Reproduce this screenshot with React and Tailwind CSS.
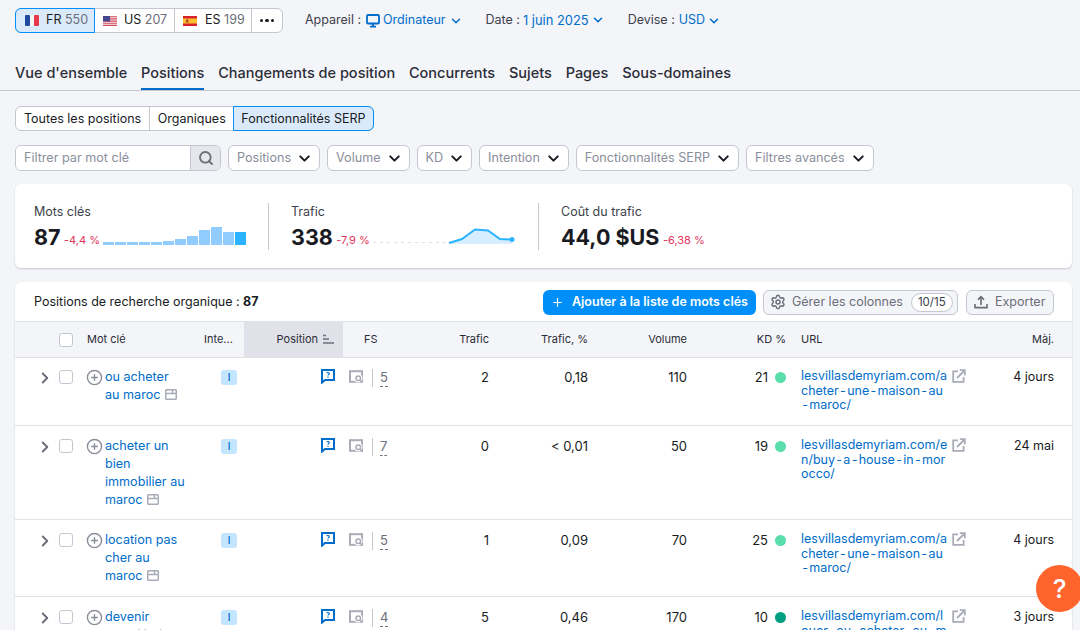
import React from "react";
import { ChevronDown, ChevronRight, CirclePlus, Search, Settings, Plus } from "lucide-react";

const FONT = { fontFamily: "Inter, 'Noto Sans', sans-serif" };

function FlagFR() {
  return (
    <svg width="14" height="11" viewBox="0 0 14 11" className="shrink-0">
      <rect width="5" height="11" fill="#1d4a9c" rx="1" />
      <rect x="5" width="4" height="11" fill="#f5f5f5" />
      <rect x="9" width="5" height="11" fill="#e5394a" rx="1" />
    </svg>
  );
}

function FlagUS() {
  return (
    <svg width="14" height="10" viewBox="0 0 14 10" className="shrink-0">
      <rect width="14" height="10" fill="#f3f3f6" />
      <path d="M0 0.7h14M0 2.9h14M0 5.1h14M0 7.3h14M0 9.4h14" stroke="#d64a5a" strokeWidth="1.1" />
      <rect width="7" height="5.5" fill="#46478f" />
    </svg>
  );
}

function FlagES() {
  return (
    <svg width="14" height="10" viewBox="0 0 14 10" className="shrink-0">
      <rect width="14" height="10" fill="#d8222e" />
      <rect y="2.5" width="14" height="5" fill="#fbc02d" />
      <rect x="3" y="3.5" width="2.5" height="3" fill="#b5462a" />
    </svg>
  );
}

function MonitorIcon() {
  return (
    <svg width="14" height="14" viewBox="0 0 14 14" className="shrink-0">
      <rect x="1" y="1" width="12" height="8.5" rx="1" fill="none" stroke="#006dca" strokeWidth="1.8" />
      <path d="M4 12.6h6M7 9.5v3" stroke="#006dca" strokeWidth="1.8" />
    </svg>
  );
}

function SortIcon() {
  return (
    <svg width="11" height="11" viewBox="0 0 11 11" className="shrink-0">
      <path d="M0 1.5h3M0 5h6M0 9h11" stroke="#6c6e79" strokeWidth="1.4" />
    </svg>
  );
}

function ExportIcon() {
  return (
    <svg width="14" height="14" viewBox="0 0 14 14" className="shrink-0">
      <path d="M1 9v3.6h12V9M7 10V2M4 4.6 7 1.6l3 3" fill="none" stroke="#6c6e79" strokeWidth="1.6" />
    </svg>
  );
}

function QuestionBubble() {
  return (
    <svg width="14" height="15" viewBox="0 0 14 15" className="shrink-0">
      <path d="M1 1h12v10H4L1 13.6Z" fill="none" stroke="#006dca" strokeWidth="2" />
      <path d="M5.7 4.2c.3-1 2.6-1 2.6.4 0 .9-1.3 1-1.3 1.9M7 7.6v1.2" fill="none" stroke="#006dca" strokeWidth="1.2" />
    </svg>
  );
}

function SerpIcon() {
  return (
    <svg width="14" height="13" viewBox="0 0 14 13" className="shrink-0">
      <rect x="1" y="1.2" width="12" height="10.6" fill="none" stroke="#a9abb6" strokeWidth="2" />
      <circle cx="9.3" cy="8.3" r="4.2" fill="#ffffff" />
      <circle cx="9.3" cy="8.3" r="2.3" fill="none" stroke="#a9abb6" strokeWidth="1.5" />
      <path d="m11 10 2 2" stroke="#a9abb6" strokeWidth="1.6" />
    </svg>
  );
}

function WindowIcon() {
  return (
    <svg width="12" height="11" viewBox="0 0 12 11" className="shrink-0 inline-block ml-[5px] align-[-1px]">
      <rect x="0.7" y="0.7" width="10.6" height="9.6" rx="1" fill="none" stroke="#a9abb6" strokeWidth="1.5" />
      <path d="M.7 4.4h10.6M7.5 .7v3.7" stroke="#a9abb6" strokeWidth="1.5" />
    </svg>
  );
}

function ExternalIcon() {
  return (
    <svg width="14" height="14" viewBox="0 0 14 14" className="shrink-0">
      <path d="M6 2.4H1.2v10.4h10.4V8" fill="none" stroke="#a9abb6" strokeWidth="1.8" />
      <path d="M5 9 12 2M7.8 1.2h5v5" fill="none" stroke="#a9abb6" strokeWidth="1.8" />
    </svg>
  );
}

function BarsChart() {
  const heights = [3, 3, 3, 3, 3, 4, 6, 9, 15, 18, 13, 13];
  return (
    <svg width="144" height="20" viewBox="0 0 144 20" className="shrink-0">
      {heights.map((h, i) => (
        <rect key={i} x={i * 12} y={20 - h} width="11" height={h} fill={i === 11 ? "#2bb3ff" : "#90ccff"} />
      ))}
    </svg>
  );
}

function TrafficChart() {
  return (
    <svg width="144" height="20" viewBox="0 0 144 20" className="shrink-0">
      <path d="M0 17.5h76" stroke="#e0e1e9" strokeWidth="1" strokeDasharray="3 4" />
      <path d="M76 18 89 14 102 4.5 115 5.5 127 14 139 14.5V19H76Z" fill="#d6eeff" />
      <path d="M76 18 89 14 102 4.5 115 5.5 127 14 139 14.5" fill="none" stroke="#2bb3ff" strokeWidth="2" />
      <circle cx="139" cy="14.5" r="2.5" fill="#2bb3ff" />
    </svg>
  );
}

function Filter({ label, className = "" }) {
  return (
    <div className={`h-[26px] flex items-center gap-[5px] pl-[8px] pr-[6px] bg-white border border-[#c4c7cf] rounded-[6px] text-[#8a8e9b] ${className}`}>
      {label}
      <ChevronDown size={17} strokeWidth={2.8} className="text-[#191b23]" />
    </div>
  );
}

function Metric({ className, title, value, delta, children }) {
  return (
    <div className={className}>
      <div className="text-[12.5px] leading-[18px] text-[#3d3f4a]">{title}</div>
      <div className="flex items-end mt-[2px] h-[28px]">
        <span className="text-[21.5px] leading-[28px] font-bold text-[#191b23]">{value}</span>
        <span className="text-[11px] leading-[16px] text-[#e0355c] ml-[3.5px] mr-[3.5px] mb-[3px]">{delta}</span>
        {children && <div className="mb-[6px]">{children}</div>}
      </div>
    </div>
  );
}

// the reference draws url hyphens wider than the font does
function UrlLine({ text }) {
  const parts = text.split("-");
  return (
    <div className="whitespace-nowrap">
      {parts.map((part, i) => (
        <React.Fragment key={i}>
          {i > 0 && <span className="mx-[1.3px]">-</span>}
          {part}
        </React.Fragment>
      ))}
    </div>
  );
}

const ROWS = [
  {
    height: "h-[68px]",
    keyword: ["ou acheter", "au maroc"],
    fs: 5, trafic: "2", pct: "0,18", volume: "110", kd: 21,
    dot: "bg-[#59ddaa]",
    url: ["lesvillasdemyriam.com/a", "cheter-une-maison-au", "-maroc/"],
    maj: "4 jours",
  },
  {
    height: "h-[94px] pt-[1px]",
    keyword: ["acheter un", "bien", "immobilier au", "maroc"],
    fs: 7, trafic: "0", pct: "< 0,01", volume: "50", kd: 19,
    dot: "bg-[#59ddaa]",
    url: ["lesvillasdemyriam.com/e", "n/buy-a-house-in-mor", "occo/"],
    maj: "24 mai",
  },
  {
    height: "h-[77px] pt-[1px]",
    keyword: ["location pas", "cher au", "maroc"],
    fs: 5, trafic: "1", pct: "0,09", volume: "70", kd: 25,
    dot: "bg-[#59ddaa]",
    url: ["lesvillasdemyriam.com/a", "cheter-une-maison-au", "-maroc/"],
    maj: "4 jours",
  },
  {
    height: "h-[94px] pt-[1px]",
    keyword: ["devenir", "propriétaire", "au maroc"],
    fs: 4, trafic: "5", pct: "0,46", volume: "170", kd: 10,
    dot: "bg-[#009f81]",
    url: ["lesvillasdemyriam.com/l", "ouer-ou-acheter-au-m", "aroc/"],
    maj: "3 jours",
  },
];

const GRID = "grid grid-cols-[72px_117px_40px_99px_56px_100px_99px_99px_99px_180px_96px]";

function Row({ row }) {
  return (
    <div className={`${GRID} ${row.height} border-b border-[#e0e1e9] text-[13px] text-[#191b23]`}>
      <div className="flex items-start justify-end gap-[5px] pt-[12px] pr-[14px]">
        <ChevronRight size={18} strokeWidth={2.6} className="text-[#6c6e79] -mt-[1.5px]" />
        <div className="w-[14px] h-[14px] bg-white border border-[#c4c7cf] rounded-[3px]" />
      </div>
      <div className="flex items-start pt-[10px]">
        <CirclePlus size={17} strokeWidth={2} className="text-[#8a8e9b] mt-[1px] -ml-[1.5px] mr-[2.5px] shrink-0" />
        <div className="text-[12.6px] leading-[18px] text-[#006dca]">
          {row.keyword.map((line, i) => (
            <div key={i} className="whitespace-nowrap">
              {line}
              {i === row.keyword.length - 1 && <WindowIcon />}
            </div>
          ))}
        </div>
      </div>
      <div className="flex justify-end pt-[12px] pr-[7px]">
        <div className="w-[16px] h-[15px] rounded-[3px] bg-[#c4e5fe] text-[#006dca] text-[10px] leading-[15px] text-center font-medium">I</div>
      </div>
      <div className="flex justify-end pt-[11px] pr-[8px]">
        <QuestionBubble />
      </div>
      <div className="flex items-start pt-[12px] pl-[6px]">
        <SerpIcon />
        <div className="w-px h-[18px] bg-[#c4c7cf] ml-[9px] -mt-[1px]" />
        <div className="ml-[7px] leading-[17px] text-[#6c6e79] border-b border-dashed border-[#6c6e79] h-[18px] -mt-[1px]">{row.fs}</div>
      </div>
      <div className="text-right pr-[10px] pt-[10px] leading-[18px]">{row.trafic}</div>
      <div className="text-right pr-[10px] pt-[10px] leading-[18px]">{row.pct}</div>
      <div className="text-right pr-[10px] pt-[10px] leading-[18px]">{row.volume}</div>
      <div className="flex justify-end items-center gap-[7px] pr-[10px] pt-[10px] h-[28px] leading-[18px]">
        {row.kd}
        <span className={`w-[11px] h-[11px] rounded-full ${row.dot}`} />
      </div>
      <div className="flex pl-[5px] pt-[11px]">
        <div className="w-[151px] text-[12.5px] leading-[14.5px] text-[#006dca]">
          {row.url.map((line, i) => (
            <UrlLine key={i} text={line} />
          ))}
        </div>
        <ExternalIcon />
      </div>
      <div className="text-right text-[12.5px] pr-[18px] pt-[10px] leading-[18px]">{row.maj}</div>
    </div>
  );
}

export default function App() {
  return (
    <div style={FONT} className="relative w-[1080px] h-[630px] overflow-hidden bg-[#f4f5f9] text-[13px] text-[#191b23]">
      {/* region + device pickers */}
      <div className="flex items-center pl-[15px] pt-[8px] h-[33px]">
        <div className="flex h-[25px] text-[12.5px] bg-white border border-[#c4c7cf] rounded-[6px]">
          <div className="flex items-center gap-[7px] w-[80px] pl-[9px] -m-px h-[25px] bg-[#dbeafa] border border-[#008ff8] rounded-l-[6px]">
            <FlagFR />
            <span>FR <span className="text-[#6c6e79]">550</span></span>
          </div>
          <div className="flex items-center gap-[7px] w-[81px] pl-[9px] border-r border-[#c4c7cf]">
            <FlagUS />
            <span>US <span className="text-[#6c6e79]">207</span></span>
          </div>
          <div className="flex items-center gap-[8px] w-[77px] pl-[8px] border-r border-[#c4c7cf]">
            <FlagES />
            <span>ES <span className="text-[#6c6e79]">199</span></span>
          </div>
          <div className="flex items-center justify-center gap-[2px] w-[30px]">
            <span className="w-[3.5px] h-[3.5px] rounded-full bg-[#191b23]" />
            <span className="w-[3.5px] h-[3.5px] rounded-full bg-[#191b23]" />
            <span className="w-[3.5px] h-[3.5px] rounded-full bg-[#191b23]" />
          </div>
        </div>
        <div className="flex items-center ml-[22px] text-[12.5px] text-[#3d3f4a]">
          Appareil :
          <span className="ml-[5px] mr-[3px]"><MonitorIcon /></span>
          <span className="text-[#006dca]">Ordinateur</span>
          <ChevronDown size={14} strokeWidth={2.6} className="text-[#006dca] ml-[3px]" />
        </div>
        <div className="flex items-center ml-[23px] text-[12.5px] text-[#3d3f4a]">
          Date :<span className="text-[12.9px] text-[#006dca] ml-[3px]">1 juin 2025</span>
          <ChevronDown size={14} strokeWidth={2.6} className="text-[#006dca] ml-[2px]" />
        </div>
        <div className="flex items-center ml-[23px] text-[12.5px] text-[#3d3f4a]">
          Devise :<span className="text-[#006dca] ml-[4px]">USD</span>
          <ChevronDown size={14} strokeWidth={2.6} className="text-[#006dca] ml-[2px]" />
        </div>
      </div>

      {/* tabs */}
      <div className="flex gap-[13.8px] h-[50px] mt-[8px] px-[15px] pt-[22px] border-b border-[#c4c7cf] text-[14.5px] font-medium leading-[20px] text-[#2b2d38]">
        <div>Vue d'ensemble</div>
        <div className="h-[27px] border-b-2 border-[#006dca]">Positions</div>
        <div>Changements de position</div>
        <div>Concurrents</div>
        <div>Sujets</div>
        <div>Pages</div>
        <div>Sous-domaines</div>
      </div>

      {/* type switch */}
      <div className="flex w-fit ml-[15px] mt-[15px] h-[25px] text-[12.5px] bg-white border border-[#c4c7cf] rounded-[6px]">
        <div className="flex items-center px-[8px] pt-[1px] border-r border-[#c4c7cf]">Toutes les positions</div>
        <div className="flex items-center pl-[7.5px] pr-[8px] pt-[1px]">Organiques</div>
        <div className="flex items-center px-[7.5px] pt-[1px] -m-px h-[25px] bg-[#dbeafa] border border-[#008ff8] rounded-r-[6px]">Fonctionnalités SERP</div>
      </div>

      {/* filters */}
      <div className="flex gap-[7px] ml-[15px] mt-[14px] text-[12.6px]">
        <div className="flex w-[206px] h-[26px] border border-[#c4c7cf] rounded-[6px] overflow-hidden">
          <div className="flex-1 flex items-center pl-[8px] bg-white text-[#8a8e9b]">Filtrer par mot clé</div>
          <div className="flex items-center justify-center w-[30px] bg-[#e6e7ed] border-l border-[#c4c7cf]">
            <Search size={16} strokeWidth={2.8} className="text-[#6c6e79]" />
          </div>
        </div>
        <Filter label="Positions" />
        <Filter label="Volume" />
        <Filter label="KD" />
        <Filter label="Intention" />
        <Filter label="Fonctionnalités SERP" />
        <Filter label="Filtres avancés" />
      </div>

      {/* summary card */}
      <div className="flex items-stretch ml-[15px] mt-[13px] w-[1057px] h-[84px] bg-white rounded-[6px] shadow-[0_1px_2px_rgba(25,27,35,0.2)] pt-[19px] pb-[18px]">
        <Metric className="w-[254px] pl-[19px] border-r border-[#c4c7cf]" title="Mots clés" value="87" delta="-4,4 %">
          <BarsChart />
        </Metric>
        <Metric className="w-[270px] pl-[22px] border-r border-[#c4c7cf]" title="Trafic" value="338" delta="-7,9 %">
          <TrafficChart />
        </Metric>
        <Metric className="pl-[22px]" title="Coût du trafic" value="44,0 $US" delta="-6,38 %" />
      </div>

      {/* table card */}
      <div className="ml-[15px] mt-[14px] w-[1057px] bg-white rounded-t-[6px] shadow-[0_1px_2px_rgba(25,27,35,0.2)]">
        <div className="flex items-center h-[39px] pt-[1px] pl-[19px] pr-[18px] gap-[7px] text-[12.5px]">
          <div className="mr-auto">Positions de recherche organique : <b className="font-bold">87</b></div>
          <div className="flex items-center h-[25px] w-[213px] pl-[8px] gap-[8px] rounded-[6px] bg-[#008ff8] text-white font-semibold">
            <Plus size={13} strokeWidth={2.2} />
            Ajouter à la liste de mots clés
          </div>
          <div className="flex items-center h-[25px] w-[195px] pl-[6px] gap-[6px] rounded-[6px] bg-[#f4f5f9] border border-[#c4c7cf] text-[#6c6e79]">
            <Settings size={16} strokeWidth={2.2} />
            Gérer les colonnes
            <span className="ml-[2px] h-[19px] px-[6px] leading-[17px] rounded-full bg-white border border-[#c4c7cf] text-[11.5px] text-[#3d3f4a]">10/15</span>
          </div>
          <div className="flex items-center h-[25px] w-[88px] pl-[7px] gap-[7px] ml-[1px] rounded-[6px] bg-[#f4f5f9] border border-[#c4c7cf] text-[#6c6e79]">
            <ExportIcon />
            Exporter
          </div>
        </div>

        <div className={`${GRID} h-[37px] items-stretch bg-[#f4f5f9] border-y border-[#e0e1e9] text-[11px] text-[#2b2d38]`}>
          <div className="flex items-center justify-end pr-[14px]">
            <div className="w-[14px] h-[14px] bg-white border border-[#c4c7cf] rounded-[3px]" />
          </div>
          <div className="flex items-center">Mot clé</div>
          <div className="flex items-center">Inte...</div>
          <div className="flex items-center justify-end pr-[9px] bg-[#e0e1e9] gap-[5px]">
            Position
            <SortIcon />
          </div>
          <div className="flex items-center pl-[21px]">FS</div>
          <div className="flex items-center justify-end pr-[10px]">Trafic</div>
          <div className="flex items-center justify-end pr-[10px]">Trafic, %</div>
          <div className="flex items-center justify-end pr-[10px]">Volume</div>
          <div className="flex items-center justify-end pr-[10px]">KD %</div>
          <div className="flex items-center pl-[5px]">URL</div>
          <div className="flex items-center justify-end pr-[18px]">Màj.</div>
        </div>

        {ROWS.map((row, i) => (
          <Row key={i} row={row} />
        ))}
      </div>

      {/* help bubble */}
      <div className="absolute left-[1036px] top-[565px] w-[47px] h-[47px] rounded-full bg-[#ff642d] text-white text-[26px] font-medium flex items-center justify-center">?</div>
    </div>
  );
}
